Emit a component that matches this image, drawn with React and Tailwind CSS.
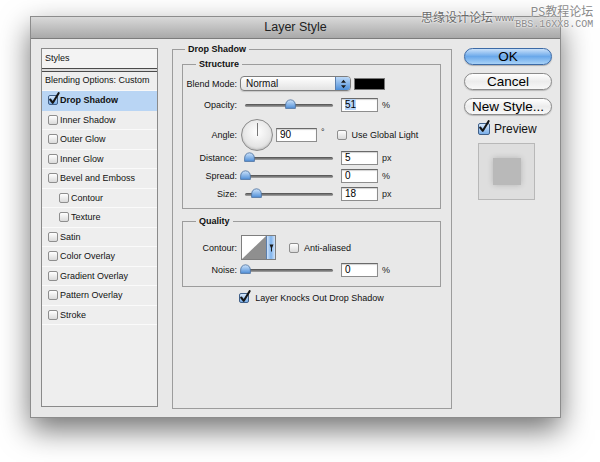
import React from "react";

const Check = ({ checked, className = "" }) => (
  <span
    className={`relative inline-block w-[10px] h-[10px] shrink-0 rounded-[2px] border ${
      checked
        ? "border-[#3f5f88] bg-gradient-to-b from-[#d6e8fb] to-[#7aaee8]"
        : "border-[#8e8e8e] bg-gradient-to-b from-[#ffffff] to-[#dadada]"
    } ${className}`}
  >
    {checked && (
      <svg className="absolute left-[-1px] top-[-4px] w-[12px] h-[13px]" viewBox="0 0 12 13">
        <path
          d="M2.2 7.5 L4.8 10.8 L10.6 1.2"
          fill="none"
          stroke="#151515"
          strokeWidth="2.1"
          strokeLinecap="round"
          strokeLinejoin="round"
        />
      </svg>
    )}
  </span>
);

const Slider = ({ pos }) => (
  <div className="relative w-[88px] h-[14px] shrink-0">
    <div className="absolute left-0 right-0 top-[6px] h-[3px] rounded-full bg-gradient-to-b from-[#4d4d4d] to-[#a8a8a8]" />
    <svg className="absolute top-[1px] w-[11px] h-[10px]" style={{ left: pos - 5 }} viewBox="0 0 11 10">
      <defs>
        <linearGradient id="thumb" x1="0" y1="0" x2="0" y2="1">
          <stop offset="0" stopColor="#cfe4fb" />
          <stop offset="1" stopColor="#4f8fd8" />
        </linearGradient>
      </defs>
      <path d="M0.6 9.4 L0.6 6.2 Q0.8 1.2 5.5 0.8 Q10.2 1.2 10.4 6.2 L10.4 9.4 Z" fill="url(#thumb)" stroke="#4a6e9c" strokeWidth="0.8" />
    </svg>
  </div>
);

const Field = ({ value, w = "w-[37px]", selected }) => (
  <div
    className={`${w} h-[14px] shrink-0 border border-[#8d8d8d] border-t-[#6a6a6a] bg-white pl-[3px] text-[10px] leading-[12px] text-black shadow-[inset_0_1px_1px_rgba(0,0,0,0.18)]`}
  >
    <span className={selected ? "bg-[#b6d4f8]" : ""}>{value}</span>
  </div>
);

const Label = ({ children }) => (
  <span className="w-[54px] shrink-0 whitespace-nowrap text-right text-[9px] leading-[12px] text-[#111]">{children}</span>
);

const Unit = ({ children }) => (
  <span className="ml-[4px] text-[9px] leading-[12px] text-[#222]">{children}</span>
);

const SliderRow = ({ label, pos, value, unit, selected, className = "" }) => (
  <div className={`flex items-center h-[14px] ${className}`}>
    <Label>{label}</Label>
    <div className="ml-[8px]">
      <Slider pos={pos} />
    </div>
    <div className="ml-[8px]">
      <Field value={value} selected={selected} />
    </div>
    <Unit>{unit}</Unit>
  </div>
);

const Legend = ({ children, ml = "ml-[13px]" }) => (
  <legend className={`${ml} px-[3px] whitespace-nowrap text-[9px] leading-[12px] font-bold text-[#111]`}>{children}</legend>
);

const AquaButton = ({ children, primary, className = "" }) => (
  <button
    className={`w-[88px] h-[17px] rounded-full border whitespace-nowrap text-[13.5px] leading-[15px] text-black ${
      primary
        ? "border-[#3c6aa6] bg-gradient-to-b from-[#c9e1f9] via-[#6aa8ea] to-[#a8d2f7] shadow-[0_1px_1px_rgba(0,0,0,0.25)]"
        : "border-[#8a8a8a] bg-gradient-to-b from-[#ffffff] via-[#ececec] to-[#f8f8f8] shadow-[0_1px_1px_rgba(0,0,0,0.2)]"
    } ${className}`}
  >
    {children}
  </button>
);

const styleItems = [
  { name: "Drop Shadow", checked: true },
  { name: "Inner Shadow" },
  { name: "Outer Glow" },
  { name: "Inner Glow" },
  { name: "Bevel and Emboss" },
  { name: "Contour", sub: true },
  { name: "Texture", sub: true },
  { name: "Satin" },
  { name: "Color Overlay" },
  { name: "Gradient Overlay" },
  { name: "Pattern Overlay" },
  { name: "Stroke" },
];

export default function App() {
  return (
    <div className="relative w-[600px] h-[462px] overflow-hidden bg-white pt-[16px] pl-[30px] font-['Liberation_Sans',Arial,sans-serif]">
      {/* dialog window */}
      <div className="w-[531px] h-[402px] flex flex-col border border-[#8c8c8c] bg-[#e8e8e8] shadow-[0_12px_28px_rgba(0,0,0,0.55)]">
        <div className="h-[22px] shrink-0 flex items-center justify-center border-b border-[#7c7c7c] bg-gradient-to-b from-[#d9d9d9] to-[#a9a9a9] text-[12.5px] text-[#222]">
          Layer Style
        </div>

        <div className="flex flex-1 pl-[10px]">
          {/* styles list */}
          <div className="mt-[9px] w-[117px] h-[359px] shrink-0 border border-[#8a8a8a] bg-[#eeeeee]">
            <div className="h-[19px] flex items-center pl-[3px] bg-[#f3f3f3] text-[9px] text-[#111]">Styles</div>
            <div className="h-[4px] border-y border-[#4a4a4a] bg-[#dcdcdc]" />
            <div className="h-[19px] flex items-center pl-[3px] border-b border-[#f8f8f8] whitespace-nowrap text-[9px] text-[#111]">
              Blending Options: Custom
            </div>
            {styleItems.map((it) => (
              <div
                key={it.name}
                className={`h-[19.5px] flex items-center border-b ${
                  it.checked ? "bg-[#b9d5f4] border-[#b9d5f4]" : "border-[#fafafa]"
                } ${it.sub ? "pl-[17px]" : "pl-[6px]"}`}
              >
                <Check checked={it.checked} />
                <span className={`ml-[2px] whitespace-nowrap text-[9px] leading-[12px] text-[#111] ${it.checked ? "font-bold" : ""}`}>
                  {it.name}
                </span>
              </div>
            ))}
          </div>

          {/* main group */}
          <fieldset className="ml-[14px] mt-[4px] w-[280px] h-[366px] shrink-0 border border-[#9c9c9c]">
            <Legend ml="ml-[12px]">Drop Shadow</Legend>
            <div className="pl-[9px] pr-[10px]">
              <fieldset className="mt-[3px] border border-[#9c9c9c] pb-[7px]">
                <Legend>Structure</Legend>

                <div className="flex items-center h-[15px] mt-[6px]">
                  <Label>Blend Mode:</Label>
                  <div className="ml-[3px] w-[111px] h-[15px] flex rounded-[4px] border border-[#7e7e7e] bg-gradient-to-b from-[#ffffff] to-[#e3e3e3] shadow-[0_1px_1px_rgba(0,0,0,0.15)]">
                    <span className="flex-1 pl-[5px] text-[10px] leading-[13px] text-[#111]">Normal</span>
                    <span className="w-[15px] h-full flex flex-col items-center justify-center rounded-r-[3px] border-l border-[#5b7fad] bg-gradient-to-b from-[#bcd9f8] to-[#4d8fd9]">
                      <svg width="7" height="10" viewBox="0 0 7 10">
                        <path d="M3.5 0.8 L6 3.8 L1 3.8 Z M3.5 9.2 L6 6.2 L1 6.2 Z" fill="#1a1a1a" />
                      </svg>
                    </span>
                  </div>
                  <div className="ml-[3px] w-[31px] h-[12px] border border-[#777] bg-black" />
                </div>

                <SliderRow label="Opacity:" pos={45} value="51" unit="%" selected className="mt-[7px]" />

                <div className="flex items-center h-[33px] mt-[6px]">
                  <Label>Angle:</Label>
                  <div className="ml-[4px] relative w-[32px] h-[32px] rounded-full border border-[#8a8a8a] bg-[radial-gradient(circle_at_50%_40%,#ffffff,#e6e6e6_60%,#cfcfcf)] shadow-[inset_0_-1px_2px_rgba(0,0,0,0.15)]">
                    <div className="absolute left-[15px] top-[3px] w-[1px] h-[13px] bg-[#777]" />
                  </div>
                  <div className="ml-[3px]">
                    <Field value="90" w="w-[41px]" />
                  </div>
                  <span className="ml-[4px] -mt-[4px] text-[9px] text-[#222]">°</span>
                  <Check className="ml-[12px]" />
                  <span className="ml-[5px] whitespace-nowrap text-[9px] leading-[12px] text-[#111]">Use Global Light</span>
                </div>

                <SliderRow label="Distance:" pos={4} value="5" unit="px" />
                <SliderRow label="Spread:" pos={0} value="0" unit="%" className="mt-[4px]" />
                <SliderRow label="Size:" pos={11} value="18" unit="px" className="mt-[4px]" />
              </fieldset>

              <fieldset className="mt-[6px] border border-[#9c9c9c] pb-[9px]">
                <Legend>Quality</Legend>
                <div className="flex items-center h-[25px] mt-[8px]">
                  <Label>Contour:</Label>
                  <div className="ml-[4px] w-[35px] h-[25px] flex border border-[#7e7e7e] bg-white">
                    <svg className="w-[24px] h-full" viewBox="0 0 24 23" preserveAspectRatio="none">
                      <path d="M0 23 L24 0 L24 23 Z" fill="#8f8f8f" />
                    </svg>
                    <span className="flex-1 flex items-center justify-center border-l border-[#5b7fad] bg-gradient-to-r from-[#cfe3fa] via-[#7fb3ec] to-[#cfe3fa]">
                      <svg width="5" height="8" viewBox="0 0 5 8">
                        <path d="M0.5 0.5 L4.5 0.5 L3 4 L3 7.5 L2 7.5 L2 4 Z" fill="#1a1a1a" />
                      </svg>
                    </span>
                  </div>
                  <Check className="ml-[13px]" />
                  <span className="ml-[5px] whitespace-nowrap text-[9px] leading-[12px] text-[#111]">Anti-aliased</span>
                </div>
                <SliderRow label="Noise:" pos={0} value="0" unit="%" className="mt-[3px]" />
              </fieldset>

              <div className="mt-[5px] h-[12px] flex items-center justify-center">
                <Check checked />
                <span className="ml-[6px] whitespace-nowrap text-[9px] leading-[12px] text-[#111]">Layer Knocks Out Drop Shadow</span>
              </div>
            </div>
          </fieldset>

          {/* buttons */}
          <div className="ml-[12px] w-[88px] shrink-0 flex flex-col">
            <AquaButton primary className="mt-[9px]">OK</AquaButton>
            <AquaButton className="mt-[8px]">Cancel</AquaButton>
            <AquaButton className="mt-[8px]">New Style...</AquaButton>
            <div className="mt-[8px] ml-[14px] h-[12px] flex items-center">
              <Check checked className="w-[12px] h-[12px]" />
              <span className="ml-[4px] text-[12px] leading-[13px] text-[#111]">Preview</span>
            </div>
            <div className="mt-[8px] ml-[14px] w-[57px] h-[57px] flex items-center justify-center border border-[#b8b8b8] bg-[#dedede]">
              <div className="w-[28px] h-[27px] bg-[#b9b9b9] shadow-[0_0_6px_rgba(0,0,0,0.18)]" />
            </div>
          </div>
        </div>
      </div>

      {/* watermark over the title bar */}
      <div className="absolute top-[3px] left-[421px] flex items-start whitespace-nowrap text-[#6a6a6a] [text-shadow:0_0_2px_#fff,0_0_2px_#fff] font-['Noto_Sans_CJK_SC',sans-serif]">
        <span className="mt-[7px] text-[12px] leading-[14px]">思缘设计论坛</span>
        <span className="mt-[9px] ml-[2px] text-[8px] leading-[11px]">www.</span>
        <div className="-ml-[1px] flex flex-col items-end">
          <span className="text-[12px] leading-[15px] text-[#8a8a8a]">PS教程论坛</span>
          <span className="mt-[2px] text-[10px] leading-[10px] font-['Liberation_Mono',monospace] text-[#8a8a8a]">BBS.16XX8.COM</span>
        </div>
      </div>
    </div>
  );
}
